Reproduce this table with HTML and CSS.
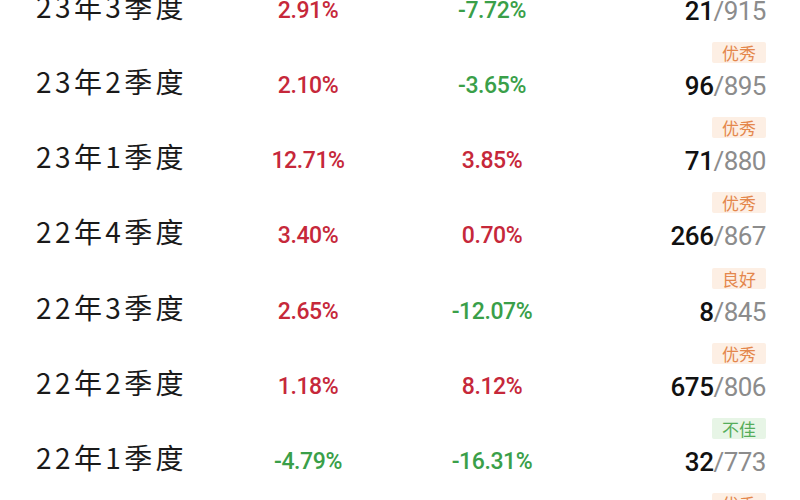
FILE: index.html
```html
<!DOCTYPE html>
<html lang="zh-CN">
<head>
<meta charset="utf-8">
<title>季度排名</title>
<link rel="stylesheet" href="styles.css">
</head>
<body>
<div class="list">
  <div class="row">
    <div class="badge good">优秀</div>
    <div class="label">23年3季度</div>
    <div class="pct up">2.91%</div>
    <div class="pct down">-7.72%</div>
    <div class="rank"><b>21</b>/915</div>
  </div>
  <div class="row">
    <div class="badge good">优秀</div>
    <div class="label">23年2季度</div>
    <div class="pct up">2.10%</div>
    <div class="pct down">-3.65%</div>
    <div class="rank"><b>96</b>/895</div>
  </div>
  <div class="row">
    <div class="badge good">优秀</div>
    <div class="label">23年1季度</div>
    <div class="pct up">12.71%</div>
    <div class="pct up">3.85%</div>
    <div class="rank"><b>71</b>/880</div>
  </div>
  <div class="row">
    <div class="badge good">优秀</div>
    <div class="label">22年4季度</div>
    <div class="pct up">3.40%</div>
    <div class="pct up">0.70%</div>
    <div class="rank"><b>266</b>/867</div>
  </div>
  <div class="row">
    <div class="badge good">良好</div>
    <div class="label">22年3季度</div>
    <div class="pct up">2.65%</div>
    <div class="pct down">-12.07%</div>
    <div class="rank"><b>8</b>/845</div>
  </div>
  <div class="row">
    <div class="badge good">优秀</div>
    <div class="label">22年2季度</div>
    <div class="pct up">1.18%</div>
    <div class="pct up">8.12%</div>
    <div class="rank"><b>675</b>/806</div>
  </div>
  <div class="row">
    <div class="badge bad">不佳</div>
    <div class="label">22年1季度</div>
    <div class="pct down">-4.79%</div>
    <div class="pct down">-16.31%</div>
    <div class="rank"><b>32</b>/773</div>
  </div>
  <div class="row">
    <div class="badge good">优秀</div>
    <div class="label">21年4季度</div>
    <div class="pct up">5.02%</div>
    <div class="pct up">1.27%</div>
    <div class="rank"><b>120</b>/760</div>
  </div>
</div>
</body>
</html>
```

FILE: styles.css
```css
html, body {
  margin: 0;
  padding: 0;
  width: 800px;
  height: 500px;
  overflow: hidden;
  background: #ffffff;
}

body {
  font-family: Roboto, "Noto Sans CJK SC", sans-serif;
  color: #1c1c1c;
}

.list {
  margin-top: -37.2px;
}

.row {
  height: 75.2px;
  display: grid;
  grid-template-columns: 180px 184px 184px 182px;
  grid-template-rows: 26px 1fr;
  padding: 0 34px 0 36px;
  box-sizing: border-box;
}

.badge {
  grid-column: 4;
  grid-row: 1;
  justify-self: end;
  align-self: start;
  margin-top: 4px;
  height: 21px;
  line-height: 21px;
  padding: 0 10px;
  font-family: "Noto Sans CJK SC", sans-serif;
  font-size: 17px;
  border-radius: 2px;
}

.badge.good {
  background: #fdefe4;
  color: #e4874c;
}

.badge.bad {
  background: #e7f5e6;
  color: #55ad5a;
}

.label {
  grid-column: 1;
  grid-row: 2;
  align-self: start;
  font-family: "Noto Sans CJK SC", sans-serif;
  font-size: 28px;
  line-height: 34px;
  letter-spacing: 3.4px;
  color: #1a1a1a;
  white-space: nowrap;
}

.pct {
  grid-row: 2;
  align-self: start;
  justify-self: center;
  font-size: 23px;
  font-weight: 500;
  line-height: 44px;
  letter-spacing: -0.4px;
}

.pct.up {
  color: #c6283a;
}

.pct.down {
  color: #3a9f49;
}

.rank {
  grid-column: 4;
  grid-row: 2;
  justify-self: end;
  align-self: start;
  font-size: 26px;
  line-height: 44px;
  color: #8c8c8c;
  letter-spacing: -0.5px;
}

.rank b {
  color: #111111;
  font-weight: 500;
}
```
